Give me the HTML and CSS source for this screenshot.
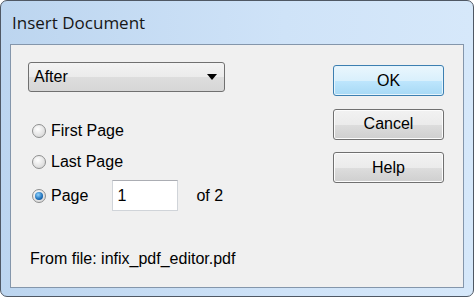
FILE: index.html
```html
<!DOCTYPE html>
<html lang="en">
<head>
<title>Insert Document</title>
<meta charset="utf-8">
<link rel="stylesheet" href="styles.css">
</head>
<body>

<div class="window">
  <header class="titlebar">Insert Document</header>

  <section class="content">
    <div class="options">
      <div class="dropdown">
        <span>After</span>
        <span class="arrow"></span>
      </div>

      <div class="radio-row">
        <span class="radio"></span> First Page
      </div>
      <div class="radio-row">
        <span class="radio"></span> Last Page
      </div>
      <div class="radio-row page-row">
        <span class="radio checked"></span> Page
        <span class="page-box">1</span>
        <span class="page-total">of 2</span>
      </div>

      <p class="from-file">From file: infix_pdf_editor.pdf</p>
    </div>

    <div class="buttons">
      <button class="btn btn-default">OK</button>
      <button class="btn">Cancel</button>
      <button class="btn">Help</button>
    </div>
  </section>
</div>

</body>
</html>
```

FILE: styles.css
```css
* {
  box-sizing: border-box;
}

body {
  margin: 0;
  background: #ffffff;
  font-family: "Liberation Sans", Arial, sans-serif;
  font-size: 16px;
  color: #000;
}

/* Window frame */
.window {
  width: 474px;
  height: 297px;
  border: 1px solid #4f5864;
  border-radius: 7px;
  background: linear-gradient(to right, #bcd5ef, #cfe3f8 60%, #d6e8fa);
  padding: 0 9px 8px 9px;
  display: flex;
  flex-direction: column;
}

.titlebar {
  height: 43px;
  display: flex;
  align-items: center;
  padding-left: 2px;
  padding-bottom: 1px;
  font-family: "Open Sans", sans-serif;
  font-size: 17px;
  color: #161616;
}

.content {
  flex: 1;
  background: #f0f0f0;
  border: 1px solid #8496ab;
  padding: 17px 19px 0 17px;
  display: flex;
}

.options {
  flex: 1;
}

/* Combo box */
.dropdown {
  width: 197px;
  height: 30px;
  border: 1px solid #707070;
  border-radius: 3px;
  background: linear-gradient(#f3f3f3, #ebebeb 50%, #dddddd 51%, #d6d6d6);
  display: flex;
  align-items: center;
  justify-content: space-between;
  padding: 0 7px 0 5px;
}

.arrow {
  width: 0;
  height: 0;
  border-left: 5px solid transparent;
  border-right: 5px solid transparent;
  border-top: 6px solid #000;
}

/* Radio options */
.radio-row {
  height: 31px;
  display: flex;
  align-items: center;
  gap: 5px;
  padding-left: 4px;
}

.dropdown + .radio-row {
  margin-top: 23px;
}

.page-row {
  margin-top: 3px;
}

.radio {
  width: 14px;
  height: 14px;
  border-radius: 50%;
  border: 1px solid #8e8f8f;
  background: radial-gradient(circle at 40% 35%, #ffffff, #e2e2e2 60%, #cfcfcf);
  position: relative;
}

.radio.checked::after {
  content: "";
  position: absolute;
  left: 2px;
  top: 2px;
  width: 8px;
  height: 8px;
  border-radius: 50%;
  background: radial-gradient(circle at 40% 35%, #8fd3ff, #1d6fb8 60%, #0b3f7a);
}

.page-box {
  width: 66px;
  height: 31px;
  background: #fff;
  border: 1px solid #d0d4d9;
  border-top-color: #abadb3;
  margin-left: 19px;
  padding-left: 4px;
  display: flex;
  align-items: center;
}

.page-total {
  margin-left: 13px;
}

.from-file {
  margin: 38px 0 0 2px;
  line-height: 20px;
}

/* Buttons */
.buttons {
  width: 111px;
  margin-top: 3px;
  display: flex;
  flex-direction: column;
  gap: 12.5px;
}

.btn {
  height: 31px;
  font-family: "Liberation Sans", Arial, sans-serif;
  font-size: 16px;
  color: #000;
  border: 1px solid #707070;
  border-radius: 3px;
  background: linear-gradient(#f2f2f2, #ebebeb 50%, #dddddd 51%, #cfcfcf);
  box-shadow: inset 0 0 0 1px #fcfcfc;
  padding: 0;
}

.btn-default {
  border-color: #3c7fb1;
  background: linear-gradient(#eaf6fd, #d9f0fc 50%, #bee6fd 51%, #a7d9f5);
  box-shadow: inset 0 0 0 1px #e5f4fc;
}
```
